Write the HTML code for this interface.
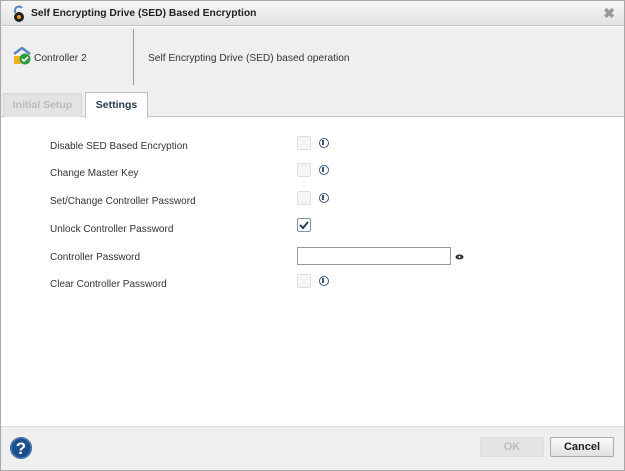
<!DOCTYPE html>
<html><head><style>
*{box-sizing:border-box;margin:0;padding:0}
body{width:625px;height:471px;font-family:"Liberation Sans",Arial,sans-serif;background:#fff;position:relative;overflow:hidden;font-size:11px;color:#333}
.frame{position:absolute;left:0;top:0;width:625px;height:471px;border:1px solid #a8a8a8}
.title{position:absolute;left:1px;top:1px;width:623px;height:25px;background:linear-gradient(#f7f7f7,#e2e2e2);border-bottom:1px solid #c8c8c8}
.title span{position:absolute;left:30px;top:7px;font-weight:bold;font-size:10.3px;color:#222}
.close{position:absolute;right:9px;top:4px;color:#999;font-size:14px;font-weight:bold}
.head{position:absolute;left:1px;top:27px;width:623px;height:63px;background:#efefef}
.sep{position:absolute;left:132px;top:2px;width:1px;height:56px;background:#999}
.tabs{position:absolute;left:1px;top:90px;width:623px;height:27px;background:#efefef;border-bottom:1px solid #c8c8c8}
.tab1{position:absolute;left:2px;top:3px;width:79px;height:24px;background:#e3e3e3;border:1px solid #d6d6d6;border-bottom:none;color:#bbb;font-weight:bold;font-size:10.5px;text-align:center;line-height:23px}
.tab2{position:absolute;left:84px;top:2px;width:63px;height:26px;background:#fff;border:1px solid #c0c0c0;border-bottom:none;color:#2a3b4c;font-weight:bold;font-size:10.5px;text-align:center;line-height:25px}
.lbl{position:absolute;left:50px;font-size:10px;color:#333}
.cb{position:absolute;left:297px;width:14px;height:14px;border:1px solid #e0e0e0;background:#f5f5f5;border-radius:2px}
.info{position:absolute;left:319px;width:10px;height:10px;border:1.5px solid #3c5a7a;border-radius:50%}
.info:after{content:"";position:absolute;left:2.3px;top:1px;width:2px;height:5px;background:#3c5a7a}
.foot{position:absolute;left:1px;top:426px;width:623px;height:44px;background:#efefef;border-top:1px solid #ddd}
.btn{position:absolute;top:10px;height:20px;font-weight:bold;font-size:11px;text-align:center;line-height:18px;border-radius:2px}
</style></head><body>
<div class="frame"></div>
<div class="title">
<svg style="position:absolute;left:10px;top:4px" width="16" height="18"><path d="M4 8V5a4 4 0 0 1 7-2" fill="none" stroke="#5a86c0" stroke-width="2"/><circle cx="8" cy="12" r="5" fill="#222"/><circle cx="8" cy="12" r="2" fill="#e8a020"/></svg>
<span>Self Encrypting Drive (SED) Based Encryption</span><div class="close">✖</div></div>
<div class="head">
<svg style="position:absolute;left:12px;top:20px" width="20" height="18"><path d="M1 7L9 1L17 7" fill="none" stroke="#5a86c0" stroke-width="2.5"/><rect x="1" y="9" width="7" height="8" fill="#f0b020"/><circle cx="12" cy="12" r="5.5" fill="#2e9a3e"/><path d="M9 12l2 2 4-4" stroke="#fff" stroke-width="1.6" fill="none"/></svg>
<div style="position:absolute;left:33px;top:26px;font-size:10.2px">Controller 2</div>
<div class="sep"></div>
<div style="position:absolute;left:147px;top:26px;font-size:10.2px">Self Encrypting Drive (SED) based operation</div>
</div>
<div class="tabs"><div class="tab1">Initial Setup</div><div class="tab2">Settings</div></div>
<div class="lbl" style="top:141px">Disable SED Based Encryption</div><div class="cb" style="top:136px"></div><div class="info" style="top:138px"></div>
<div class="lbl" style="top:168px">Change Master Key</div><div class="cb" style="top:163px"></div><div class="info" style="top:165px"></div>
<div class="lbl" style="top:196px">Set/Change Controller Password</div><div class="cb" style="top:191px"></div><div class="info" style="top:193px"></div>
<div class="lbl" style="top:224px">Unlock Controller Password</div><div class="cb" style="top:218px;border-color:#7f96ad;background:#fff"><svg width="12" height="12" style="position:absolute;left:0;top:0"><path d="M2 6l3 3 5-6" stroke="#2a3b5c" stroke-width="2" fill="none"/></svg></div>
<div class="lbl" style="top:252px">Controller Password</div>
<div style="position:absolute;left:297px;top:247px;width:154px;height:18px;border:1px solid #999;background:#fff"></div>
<svg style="position:absolute;left:455px;top:254px" width="9" height="6"><ellipse cx="4.5" cy="3" rx="4" ry="2.5" fill="#333"/><circle cx="4.5" cy="3" r="1" fill="#fff"/></svg>
<div class="lbl" style="top:279px">Clear Controller Password</div><div class="cb" style="top:274px"></div><div class="info" style="top:276px"></div>
<div class="foot">
<svg style="position:absolute;left:8px;top:9px" width="24" height="24"><circle cx="12" cy="12" r="11" fill="#1d4f8c"/><circle cx="12" cy="12" r="10" fill="none" stroke="#5d87c0" stroke-width="1"/><text x="12" y="18" text-anchor="middle" font-family="Liberation Sans" font-weight="bold" font-size="17" fill="#fff">?</text></svg>
<div class="btn" style="left:479px;width:64px;background:#e3e3e3;border:1px solid #ddd;color:#bbb">OK</div>
<div class="btn" style="left:549px;width:64px;background:linear-gradient(#fafafa,#e0e0e0);border:1px solid #aaa;color:#222">Cancel</div>
</div>
</body></html>
